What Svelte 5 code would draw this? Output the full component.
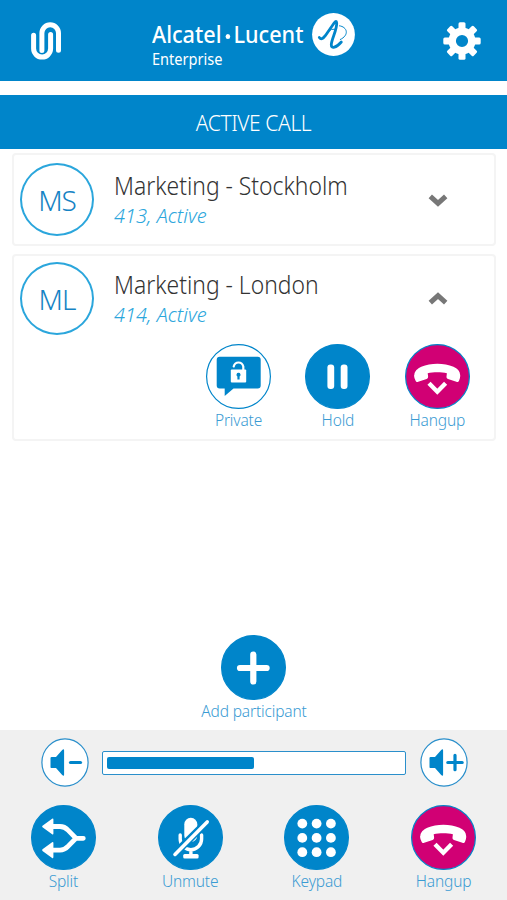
<script>
  const calls = [
    { initials: 'MS', name: 'Marketing - Stockholm', number: 413, state: 'Active', open: false },
    { initials: 'ML', name: 'Marketing - London', number: 414, state: 'Active', open: true },
  ];

  const callActions = [
    { icon: 'private', label: 'Private' },
    { icon: 'hold', label: 'Hold' },
    { icon: 'hangup', label: 'Hangup' },
  ];

  const footerActions = [
    { icon: 'split', label: 'Split' },
    { icon: 'unmute', label: 'Unmute' },
    { icon: 'keypad', label: 'Keypad' },
    { icon: 'hangup', label: 'Hangup' },
  ];

  const dots = [18.3, 32.6, 46.9];
  const teeth = [0, 45, 90, 135, 180, 225, 270, 315];

  let expanded = $state(calls.map((call) => call.open));
  let volume = $state(50);

  function toggle(i) {
    expanded[i] = !expanded[i];
  }

  function changeVolume(step) {
    volume = Math.min(100, Math.max(0, volume + step));
  }
</script>

{#snippet action(icon, label)}
  <button class="action {icon}">
    <svg class="action-icon" viewBox="0 0 65 65">
      <circle class="disc" cx="32.5" cy="32.5" r="31.9" />
      {#if icon === 'private'}
        <path class="blue" d="M13.7 12.7h38q3 0 3 3v25.8q0 3-3 3H27.5L18.7 52v-7.5h-5q-3 0-3-3V15.7q0-3 3-3z" />
        <rect class="white" x="24.8" y="25.6" width="15.4" height="13" rx="1" />
        <path class="line" stroke-width="2.2" d="M27.7 22.5q1-4 4.8-4t4.8 4V26" />
        <path class="blue" d="M32.5 28.8a2 2 0 0 1 1.1 3.7v3h-2.2v-3a2 2 0 0 1 1.1-3.7z" />
      {:else if icon === 'hold'}
        <rect class="white" x="22.4" y="20.6" width="6.8" height="24.5" rx="3" />
        <rect class="white" x="35.7" y="20.6" width="6.8" height="24.5" rx="3" />
      {:else if icon === 'hangup'}
        <path class="white" d="M9.3 31c.3-4 3-6.400 7-8.300 9.500-4.100 22.700-4.100 32.200 0 4 1.900 6.400 4.300 6.700 8.300.1 2-.3 3.800-1.200 5.700-.5 1.200-1.400 1.500-2.600 1.100l-8.400-2.900c-1.200-.5-1.600-1.200-1.500-2.400l.4-3.300c-5.500-1.300-13.700-1.300-19.200 0l.4 3.300c.1 1.200-.3 1.900-1.500 2.400l-8.400 2.900c-1.200.4-2.100.1-2.600-1.100-.9-1.900-1.600-3.700-1.500-5.700z" />
        <path class="line chevron" d="M24 39.300l8.300 8.400 8.300-8.400" />
      {:else if icon === 'add'}
        <path class="line" stroke-width="6.2" d="M19 33h26.600M32.300 19.500v27" />
      {:else if icon === 'split'}
        <path class="line" stroke-width="4.8" d="M21 21.500h8c4 0 5.500 1 8 3.700l8 8.100-8 8.100c-2.500 2.700-4 3.700-8 3.700h-8M44 33.300h8.300" />
        <path class="white" d="M11.500 20.700l9.600-7q1.300-.8 1.300.8v14q0 1.600-1.300.8l-9.600-7q-.8-.8 0-1.600zM11.500 44.300l9.600-7q1.300-.8 1.300.8v14q0 1.600-1.300.8l-9.600-7q-.8-.8 0-1.600z" />
      {:else if icon === 'unmute'}
        <rect class="white" x="26.3" y="12.8" width="13" height="24" rx="6.4" />
        <path class="line" stroke-width="3.4" d="M22.200 30v4a10.700 10.700 0 0 0 21.400 0v-4M32.900 45v5" />
        <rect class="white" x="25.2" y="49" width="15.4" height="4.4" rx="1.5" />
        <path class="cut" d="M15 50.500L51 14.800" />
        <path class="line" stroke-width="3.6" d="M17 49.400l32.200-32.500" />
      {:else if icon === 'keypad'}
        {#each dots as y}
          {#each dots as x}
            <circle class="white" cx={x} cy={y + 0.3} r="4.9" />
          {/each}
        {/each}
      {/if}
    </svg>
    <span class="action-label">{label}</span>
  </button>
{/snippet}

<div class="phone">
  <header>
    <svg class="link-icon" viewBox="0 0 30 38">
      <path d="M2.600 13.200v13.400a8.500 8.500 0 0 0 17 0V12.500M10.900 28.500V11.100a8.300 8.300 0 0 1 16.600 0v17.200" />
    </svg>
    <div class="brand">
      <div class="brand-text">
        <div class="brand-name"><span>Alcatel</span><i class="brand-dot"></i><span>Lucent</span></div>
        <div class="brand-sub">Enterprise</div>
      </div>
      <svg class="brand-logo" viewBox="0 0 43 43">
        <circle class="white" cx="21.5" cy="21.5" r="21.4" />
        <path class="logo-stroke" d="M7.300 24.500c2 2.800 4.200.6 6-1.800L22.300 9.800q2.200-3 2.400.2c.3 7-5 15.500-5.400 21.500-.2 4.800 5 3.200 10-2.500" />
        <path class="logo-thin" d="M14.500 19.500q5-4.500 9.500-3.500M27.500 12.800c8 1 10 9.500.8 13.700" />
      </svg>
    </div>
    <svg class="gear-icon" viewBox="-19 -19 38 38">
      {#each teeth as angle}
        <rect class="white" x="-3.5" y="-18.7" width="7" height="9" rx="1.5" transform="rotate({angle})" />
      {/each}
      <circle class="gear-ring" r="9.8" />
    </svg>
  </header>

  <h1>ACTIVE CALL</h1>

  <main>
    {#each calls as call, i}
      <section class="card" class:open={expanded[i]}>
        <div class="card-top">
          <div class="avatar">{call.initials}</div>
          <div class="caller">
            <div class="caller-name">{call.name}</div>
            <div class="caller-info">{call.number}, {call.state}</div>
          </div>
          <button class="toggle" aria-label="Toggle details" onclick={() => toggle(i)}>
            <svg class:up={expanded[i]} viewBox="0 0 20 14">
              <path d="M2.300 3.300l7.700 7 7.700-7" />
            </svg>
          </button>
        </div>
        {#if expanded[i]}
          <div class="card-actions">
            {#each callActions as item}
              {@render action(item.icon, item.label)}
            {/each}
          </div>
        {/if}
      </section>
    {/each}

    <div class="add-row">
      {@render action('add', 'Add participant')}
    </div>
  </main>

  <footer>
    <div class="volume">
      <button class="volume-button" aria-label="Volume down" onclick={() => changeVolume(-10)}>
        <svg viewBox="0 0 48 49">
          <ellipse class="ring" cx="24" cy="24.5" rx="23.1" ry="23.6" />
          <path class="blue" d="M10.700 18.900H15l6.200-7q1.900-1.600 1.900.5v24.200q0 2.100-1.900.5l-6.200-7h-4.300q-1.200 0-1.200-1.200v-8.800q0-1.200 1.200-1.200z" />
          <path class="sign" d="M29.500 24.500h10" />
        </svg>
      </button>
      <div class="track">
        <div class="fill" style="width: {volume}%"></div>
      </div>
      <button class="volume-button" aria-label="Volume up" onclick={() => changeVolume(10)}>
        <svg viewBox="0 0 48 49">
          <ellipse class="ring" cx="24" cy="24.5" rx="23.1" ry="23.6" />
          <path class="blue" d="M10.700 18.900H15l6.200-7q1.900-1.600 1.900.5v24.200q0 2.100-1.900.5l-6.200-7h-4.300q-1.200 0-1.200-1.200v-8.800q0-1.200 1.200-1.200z" />
          <path class="sign" d="M27.800 24.500h14.400M35 17.300v14.400" />
        </svg>
      </button>
    </div>
    <div class="footer-actions">
      {#each footerActions as item}
        {@render action(item.icon, item.label)}
      {/each}
    </div>
  </footer>
</div>

<style>
  :global(body) {
    background: #fff;
  }

  .phone {
    display: flex;
    flex-direction: column;
    width: 507px;
    height: 900px;
    overflow: hidden;
    font-family: 'Noto Sans', 'Open Sans', sans-serif;
    font-weight: 300;
    color: #333;
  }

  button {
    padding: 0;
    border: none;
    background: none;
    font: inherit;
    cursor: pointer;
  }

  svg {
    display: block;
  }

  header {
    display: flex;
    justify-content: space-between;
    height: 81px;
    padding: 0 26px 0 31px;
    box-sizing: border-box;
    background: #0085ca;
  }

  .link-icon {
    width: 30px;
    height: 38px;
    margin-top: 22px;
  }

  .link-icon path {
    fill: none;
    stroke: #fff;
    stroke-width: 5;
    stroke-linecap: round;
  }

  .brand {
    display: flex;
    width: 203px;
    margin-left: 3px;
    justify-content: space-between;
    color: #fff;
  }

  .brand-text {
    width: 152px;
    padding-top: 20px;
    white-space: nowrap;
  }

  .brand-name {
    display: flex;
    align-items: center;
    width: 165px;
    font-size: 23.5px;
    font-weight: 500;
    line-height: 29px;
    transform: scaleX(0.92);
    transform-origin: left;
  }

  .brand-dot {
    flex: none;
    width: 5px;
    height: 5px;
    margin: 3px 4px 0;
    border-radius: 50%;
    background: #fff;
  }

  .brand-sub {
    font-size: 16px;
    font-weight: 400;
    line-height: 20px;
    transform: scaleX(0.91);
    transform-origin: left;
  }

  .brand-logo {
    width: 43px;
    height: 43px;
    margin-top: 13px;
  }

  .logo-stroke,
  .logo-thin {
    fill: none;
    stroke: #0085ca;
    stroke-width: 2.8;
    stroke-linecap: round;
    stroke-linejoin: round;
  }

  .logo-thin {
    stroke-width: 1;
  }

  .gear-icon {
    width: 38px;
    height: 38px;
    margin-top: 22px;
  }

  .gear-ring {
    fill: none;
    stroke: #fff;
    stroke-width: 7.4;
  }

  h1 {
    margin: 14px 0 0;
    height: 54px;
    background: #0085ca;
    color: #fff;
    font-size: 21px;
    font-weight: 300;
    letter-spacing: -0.4px;
    line-height: 56px;
    text-align: center;
  }

  main {
    flex: 1;
    display: flex;
    flex-direction: column;
    gap: 8px;
    padding: 4px 11px 0 12px;
  }

  .card {
    border: 2px solid #f4f4f4;
    border-radius: 4px;
    padding: 8px 6px;
  }

  .card.open {
    padding-top: 6px;
  }

  .card-top {
    display: flex;
    align-items: center;
    height: 73px;
  }

  .avatar {
    width: 74px;
    height: 73px;
    box-sizing: border-box;
    border: 2px solid #2ba6dc;
    border-radius: 50%;
    color: #1583c4;
    font-size: 28px;
    letter-spacing: -1px;
    line-height: 71px;
    text-align: center;
  }

  .caller {
    width: 314px;
    margin-left: 20px;
    white-space: nowrap;
  }

  .caller-name {
    font-size: 25px;
    line-height: 32px;
    transform: scaleX(0.915);
    transform-origin: left;
  }

  .caller-info {
    color: #2ba6dc;
    font-size: 20px;
    font-style: italic;
    line-height: 30px;
  }

  .toggle svg {
    width: 20px;
    height: 14px;
  }

  .toggle path {
    fill: none;
    stroke: #777;
    stroke-width: 5;
  }

  .toggle .up {
    transform: rotate(180deg);
  }

  .card-actions {
    display: flex;
    justify-content: flex-end;
    margin-top: 9px;
    padding-right: 1px;
  }

  .action {
    display: flex;
    flex-direction: column;
    align-items: center;
    width: 99.4px;
    color: #3a9bd3;
    font-size: 15.5px;
    letter-spacing: -0.15px;
    line-height: 22px;
    white-space: nowrap;
  }

  .action-icon {
    width: 65px;
    height: 65px;
  }

  .disc {
    fill: #0085ca;
    stroke: #0085ca;
    stroke-width: 1.2;
  }

  .private .disc {
    fill: #fff;
  }

  .hangup .disc {
    fill: #d10074;
  }

  .white {
    fill: #fff;
  }

  .blue {
    fill: #0085ca;
  }

  .line {
    fill: none;
    stroke: #fff;
    stroke-linecap: round;
  }

  .chevron {
    stroke-width: 4.4;
    stroke-linecap: butt;
  }

  .cut {
    stroke: #0085ca;
    stroke-width: 7.5;
  }

  .add-row {
    display: flex;
    justify-content: center;
    margin-top: auto;
    padding-bottom: 8px;
  }

  footer {
    height: 170px;
    background: #f0f0f0;
  }

  .volume {
    display: flex;
    align-items: center;
    justify-content: space-between;
    padding: 8px 39px 0 40.5px;
  }

  .volume-button svg {
    width: 48px;
    height: 49px;
  }

  .ring {
    fill: #fff;
    stroke: #2a8fcb;
    stroke-width: 1.2;
  }

  .sign {
    stroke: #0085ca;
    stroke-width: 3.2;
    stroke-linecap: round;
  }

  .track {
    width: 304px;
    height: 24px;
    box-sizing: border-box;
    border: 1.5px solid #2a8fcb;
    border-radius: 2px;
    padding: 5px 4px;
    background: #fff;
  }

  .fill {
    height: 12px;
    border-radius: 2px;
    background: #0085ca;
  }

  .footer-actions {
    display: flex;
    margin-top: 18px;
  }

  .footer-actions .action {
    width: 25%;
  }
</style>
